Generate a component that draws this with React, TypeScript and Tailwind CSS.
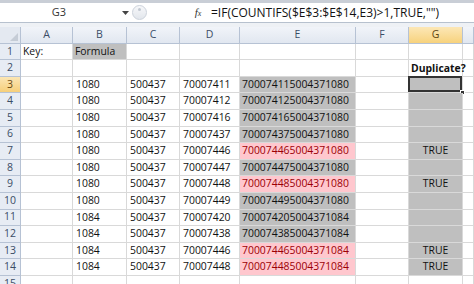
const cols = [
  { key: 'A', w: 'w-[52px]' },
  { key: 'B', w: 'w-[54px]' },
  { key: 'C', w: 'w-[53px]' },
  { key: 'D', w: 'w-[60px]' },
  { key: 'E', w: 'w-[116px]' },
  { key: 'F', w: 'w-[53px]' },
  { key: 'G', w: 'w-[54px]' },
  { key: '', w: 'flex-1' },
]

type Row = { b: string; c: string; d: string; e: string; dup: boolean }

const data: Row[] = [
  { b: '1080', c: '500437', d: '70007411', e: '700074115004371080', dup: false },
  { b: '1080', c: '500437', d: '70007412', e: '700074125004371080', dup: false },
  { b: '1080', c: '500437', d: '70007416', e: '700074165004371080', dup: false },
  { b: '1080', c: '500437', d: '70007437', e: '700074375004371080', dup: false },
  { b: '1080', c: '500437', d: '70007446', e: '700074465004371080', dup: true },
  { b: '1080', c: '500437', d: '70007447', e: '700074475004371080', dup: false },
  { b: '1080', c: '500437', d: '70007448', e: '700074485004371080', dup: true },
  { b: '1080', c: '500437', d: '70007449', e: '700074495004371080', dup: false },
  { b: '1084', c: '500437', d: '70007420', e: '700074205004371084', dup: false },
  { b: '1084', c: '500437', d: '70007438', e: '700074385004371084', dup: false },
  { b: '1084', c: '500437', d: '70007446', e: '700074465004371084', dup: true },
  { b: '1084', c: '500437', d: '70007448', e: '700074485004371084', dup: true },
]

const cellBase = 'h-full border-r border-b border-[#d9d9d9] shrink-0 flex items-center'

function RowHeader({ n, active }: { n: number | string; active?: boolean }) {
  return (
    <div
      className={`w-[21px] shrink-0 h-full flex items-center justify-center border-r border-b border-[#b6c2d4] text-[10.5px] ${
        active ? 'bg-gradient-to-b from-[#fbe6b4] to-[#f6cf7a] text-[#6b4a12]' : 'bg-[#e7ecf4] text-[#3b4d66]'
      }`}
    >
      {n}
    </div>
  )
}

function EmptyCells() {
  return (
    <>
      <div className={`${cellBase} w-[52px]`} />
      <div className={`${cellBase} w-[54px]`} />
      <div className={`${cellBase} w-[53px]`} />
      <div className={`${cellBase} w-[60px]`} />
      <div className={`${cellBase} w-[116px]`} />
      <div className={`${cellBase} w-[53px]`} />
      <div className={`${cellBase} w-[54px]`} />
      <div className={`${cellBase} flex-1`} />
    </>
  )
}

export default function App() {
  return (
    <div
      className="w-[474px] h-[284px] overflow-hidden bg-white text-[#111]"
      style={{ fontFamily: '"Open Sans", "Liberation Sans", sans-serif' }}
    >
      {/* top strip */}
      <div className="h-[3px] bg-[#c9ced6]" />

      {/* formula bar */}
      <div className="h-[20px] flex items-center border-b border-[#b7c1ce] bg-white">
        <div className="w-[118px] shrink-0 text-center text-[11px] text-[#333]">G3</div>
        <div className="w-[14px] shrink-0 flex justify-center">
          <svg width="7" height="4" viewBox="0 0 7 4">
            <path d="M0 0h7L3.5 4z" fill="#444" />
          </svg>
        </div>
        <div className="w-[54px] shrink-0 h-full flex items-center">
          <div className="w-[15px] h-[15px] rounded-full bg-gradient-to-b from-[#f7f8fa] to-[#e2e6ec] border border-[#ccd2db] flex items-start justify-center pt-[2px]">
            <div className="w-[3px] h-[3px] rounded-full bg-[#c2c8d1]" />
          </div>
        </div>
        <div
          className="w-[24px] shrink-0 text-center text-[11px] italic text-[#333]"
          style={{ fontFamily: '"Liberation Serif", serif' }}
        >
          f<span className="text-[8px]">x</span>
        </div>
        <div className="pl-[1px] text-[12px] text-[#111] whitespace-nowrap">
          =IF(COUNTIFS($E$3:$E$14,E3)&gt;1,TRUE,"")
        </div>
      </div>

      <div className="h-[4px] bg-[#eef1f5]" />

      {/* column headers */}
      <div className="h-[16.6px] flex">
        <div className="w-[21px] shrink-0 h-full bg-[#e4e9f1] border-r border-b border-[#b6c2d4] flex items-end justify-end p-[2px]">
          <svg width="8" height="8" viewBox="0 0 8 8">
            <path d="M8 0v8H0z" fill="#c5ccd6" />
          </svg>
        </div>
        {cols.map((c) => (
          <div
            key={c.key || 'rest'}
            className={`${c.w} shrink-0 h-full flex items-center justify-center border-r border-b border-[#b6c2d4] text-[10.5px] ${
              c.key === 'G'
                ? 'bg-gradient-to-b from-[#fce7b6] to-[#f7d27c] text-[#5b4412]'
                : 'bg-gradient-to-b from-[#f1f4f9] to-[#e1e7f0] text-[#3b4d66]'
            }`}
          >
            {c.key}
          </div>
        ))}
      </div>

      {/* row 1 */}
      <div className="h-[16.6px] flex text-[10.4px]">
        <RowHeader n={1} />
        <div className={`${cellBase} w-[52px] pl-[2px]`}>Key:</div>
        <div className={`${cellBase} w-[54px] pl-[2px] bg-[#bfbfbf]`}>Formula</div>
        <div className={`${cellBase} w-[53px]`} />
        <div className={`${cellBase} w-[60px]`} />
        <div className={`${cellBase} w-[116px]`} />
        <div className={`${cellBase} w-[53px]`} />
        <div className={`${cellBase} w-[54px]`} />
        <div className={`${cellBase} flex-1`} />
      </div>

      {/* row 2 */}
      <div className="h-[16.6px] flex text-[10.4px]">
        <RowHeader n={2} />
        <div className={`${cellBase} w-[52px]`} />
        <div className={`${cellBase} w-[54px]`} />
        <div className={`${cellBase} w-[53px]`} />
        <div className={`${cellBase} w-[60px]`} />
        <div className={`${cellBase} w-[116px]`} />
        <div className={`${cellBase} w-[53px]`} />
        <div className={`${cellBase} w-[54px] relative overflow-visible`}>
          <span className="absolute left-[2px] bottom-[-1px] font-bold whitespace-nowrap">Duplicate?</span>
        </div>
        <div className={`${cellBase} flex-1`} />
      </div>

      {/* data rows */}
      {data.map((r, i) => {
        const n = i + 3
        return (
          <div key={n} className="h-[16.6px] flex text-[10.4px]">
            <RowHeader n={n} active={n === 3} />
            <div className={`${cellBase} w-[52px]`} />
            <div className={`${cellBase} w-[54px] pl-[3px]`}>{r.b}</div>
            <div className={`${cellBase} w-[53px] pl-[3px]`}>{r.c}</div>
            <div className={`${cellBase} w-[60px] pl-[3px]`}>{r.d}</div>
            <div
              className={`${cellBase} w-[116px] pl-[2px] ${
                r.dup ? 'bg-[#ffc7ce] text-[#9c0006]' : 'bg-[#bfbfbf]'
              }`}
            >
              {r.e}
            </div>
            <div className={`${cellBase} w-[53px]`} />
            <div className={`${cellBase} w-[54px] justify-center bg-[#bfbfbf] relative`}>
              {r.dup ? 'TRUE' : ''}
              {n === 3 && (
                <>
                  <div className="absolute -left-[1px] -top-[1px] right-0 bottom-0 border-2 border-[#333]" />
                  <div className="absolute -right-[3px] -bottom-[3px] w-[5px] h-[5px] bg-[#333] border border-white" />
                </>
              )}
            </div>
            <div className={`${cellBase} flex-1`} />
          </div>
        )
      })}

      {/* row 15 */}
      <div className="h-[16.6px] flex text-[10.4px]">
        <RowHeader n={15} />
        <EmptyCells />
      </div>
    </div>
  )
}
